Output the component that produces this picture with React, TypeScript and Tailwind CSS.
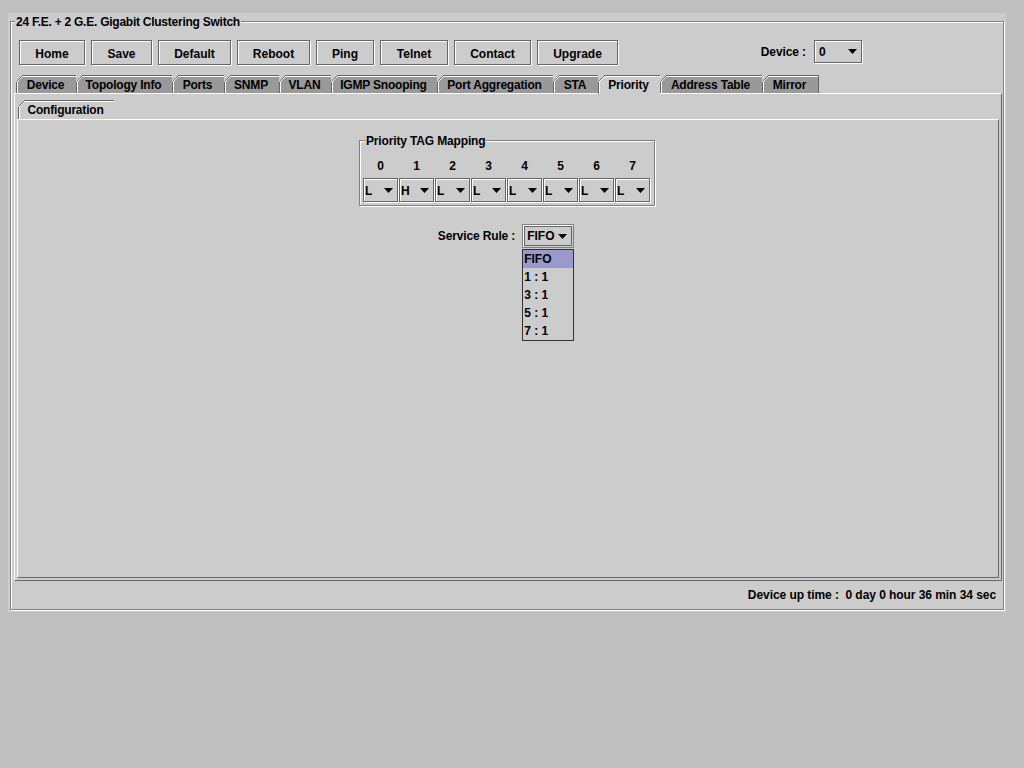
import React from "react";

const TOOL_BUTTONS = [
  { label: "Home", w: "w-[66px]" },
  { label: "Save", w: "w-[61px]" },
  { label: "Default", w: "w-[73px]" },
  { label: "Reboot", w: "w-[73px]" },
  { label: "Ping", w: "w-[58px]" },
  { label: "Telnet", w: "w-[68px]" },
  { label: "Contact", w: "w-[77px]" },
  { label: "Upgrade", w: "w-[81px]" },
];

const TABS = [
  { label: "Device", w: "w-[60px]" },
  { label: "Topology Info", w: "w-[96px]" },
  { label: "Ports", w: "w-[52px]" },
  { label: "SNMP", w: "w-[55px]" },
  { label: "VLAN", w: "w-[52px]" },
  { label: "IGMP Snooping", w: "w-[106px]" },
  { label: "Port Aggregation", w: "w-[116px]" },
  { label: "STA", w: "w-[45px]" },
  { label: "Priority", w: "w-[62px]", selected: true },
  { label: "Address Table", w: "w-[102px]" },
  { label: "Mirror", w: "w-[57px]", last: true },
];

const TAG_MAP = ["L", "H", "L", "L", "L", "L", "L", "L"];
const RULES = ["FIFO", "1 : 1", "3 : 1", "5 : 1", "7 : 1"];

function Arrow() {
  return (
    <svg width="9" height="5" viewBox="0 0 9 5" className="shrink-0">
      <path d="M0 0h9L4.5 5z" fill="#000" />
    </svg>
  );
}

function Slant({ fill }: { fill: string }) {
  // Metal-style clipped top-left corner of a tab
  return (
    <svg
      width="7"
      height="7"
      viewBox="0 0 7 7"
      shapeRendering="crispEdges"
      className="absolute left-[-1px] top-[-1px]"
    >
      <polygon points="0,0 7,0 0,7" fill={fill} />
      <line x1="0.5" y1="6.5" x2="6.5" y2="0.5" stroke="#666666" strokeWidth="1" />
      <line x1="1.5" y1="6.5" x2="6.5" y2="1.5" stroke="#ffffff" strokeWidth="1" />
    </svg>
  );
}

function Tab({
  label,
  w,
  selected,
  last,
}: {
  label: string;
  w: string;
  selected?: boolean;
  last?: boolean;
}) {
  return (
    <div
      className={[
        "relative flex items-center justify-center border-l border-t border-[#666666] pr-[2px] tracking-[-0.2px] shadow-[inset_1px_1px_0_#fff]",
        w,
        selected ? "z-10 h-[19px] bg-[#cccccc] pb-px" : "h-[18px] bg-[#999999]",
        last ? "border-r" : "",
      ].join(" ")}
    >
      <Slant fill="#cccccc" />
      {label}
    </div>
  );
}

function Combo({
  value,
  className,
}: {
  value: string;
  className: string;
}) {
  return (
    <div
      className={`flex items-center justify-between border border-[#666666] bg-[#cccccc] shadow-[inset_1px_1px_0_#fff,1px_1px_0_#fff] ${className}`}
    >
      <span>{value}</span>
      <Arrow />
    </div>
  );
}

export default function App() {
  return (
    <div className="h-[768px] w-[1024px] bg-[#c0c0c0] pl-[8px] pt-[13px] font-['Liberation_Sans',Arial,sans-serif] text-[12px] font-bold leading-[14px] text-black">
      <div className="h-[599px] w-[998px] bg-[#cccccc] pl-[2px] pt-[8px]">
        {/* titled etched frame */}
        <div className="relative flex h-[589px] w-[994px] flex-col border border-[#808080] shadow-[inset_1px_1px_0_#fff,1px_1px_0_#fff]">
          <span className="absolute left-[4px] top-[-7px] bg-[#cccccc] px-px tracking-[-0.25px]">
            24 F.E. + 2 G.E. Gigabit Clustering Switch
          </span>

          {/* toolbar */}
          <div className="mt-[18px] flex h-[25px] items-start pl-[8px]">
            <div className="flex gap-[6px]">
              {TOOL_BUTTONS.map((b) => (
                <div
                  key={b.label}
                  className={`${b.w} flex h-[25px] items-center justify-center border border-[#666666] bg-[#cccccc] pt-[2px] shadow-[inset_1px_1px_0_#fff,1px_1px_0_#fff]`}
                >
                  {b.label}
                </div>
              ))}
            </div>
            <div className="ml-auto mr-[141px] flex h-[23px] items-center gap-[8px]">
              <span className="tracking-[-0.1px]">Device :</span>
              <Combo value="0" className="h-[23px] w-[48px] pl-[4px] pr-[4px]" />
            </div>
          </div>

          {/* main tab pane */}
          <div className="ml-[3px] mt-[10px] w-[988px]">
            <div className="flex h-[18px] items-start pl-[2px]">
              {TABS.map((t) => (
                <Tab key={t.label} {...t} />
              ))}
            </div>
            <div className="h-[488px] border-b border-l border-r border-t border-b-[#666666] border-l-white border-r-[#666666] border-t-white pl-[2px] pr-[2px] pt-[6px]">
              {/* inner tab pane */}
              <div className="flex h-[19px] items-start pl-px">
                <Tab label="Configuration" w="w-[96px]" selected />
              </div>
              <div className="flex h-[459px] flex-col items-center border-b border-l border-r border-t border-b-[#666666] border-l-white border-r-[#666666] border-t-white">
                {/* Priority TAG Mapping group */}
                <div className="relative mr-[2px] mt-[20px] h-[66px] w-[296px] border border-[#808080] px-[3px] pt-[18px] shadow-[inset_1px_1px_0_#fff,1px_1px_0_#fff]">
                  <span className="absolute left-[5px] top-[-7px] bg-[#cccccc] px-px tracking-[-0.15px]">
                    Priority TAG Mapping
                  </span>
                  <div className="flex h-[14px] gap-px">
                    {TAG_MAP.map((_, i) => (
                      <div key={i} className="w-[35px] text-center">
                        {i}
                      </div>
                    ))}
                  </div>
                  <div className="mt-[5px] flex gap-px">
                    {TAG_MAP.map((v, i) => (
                      <Combo key={i} value={v} className="h-[24px] w-[35px] pl-[1px] pr-[4px] pt-px" />
                    ))}
                  </div>
                </div>

                {/* service rule */}
                <div className="mr-[4px] mt-[18px] flex items-center gap-[7px]">
                  <span className="tracking-[-0.15px]">Service Rule :</span>
                  <div className="relative">
                    <div className="flex h-[24px] w-[52px] items-center justify-between border border-[#808080] bg-[#cccccc] p-px shadow-[inset_1px_1px_0_#fff]">
                      <div className="flex h-full w-full items-center justify-between border border-[#666666] pl-[2px] pr-[4px]">
                        <span>FIFO</span>
                        <Arrow />
                      </div>
                    </div>
                    <div className="absolute left-0 top-[25px] z-20 w-[52px] border border-[#333333] bg-[#cccccc]">
                      {RULES.map((r, i) => (
                        <div
                          key={r}
                          className={`flex h-[18px] items-center pl-px ${i === 0 ? "bg-[#9999cc]" : ""}`}
                        >
                          {r}
                        </div>
                      ))}
                    </div>
                  </div>
                </div>
              </div>
            </div>
          </div>

          {/* status line */}
          <div className="flex h-[28px] items-center justify-end whitespace-pre pr-[7px] tracking-[-0.06px]">
            {"Device up time :  0 day 0 hour 36 min 34 sec"}
          </div>
        </div>
      </div>
    </div>
  );
}
